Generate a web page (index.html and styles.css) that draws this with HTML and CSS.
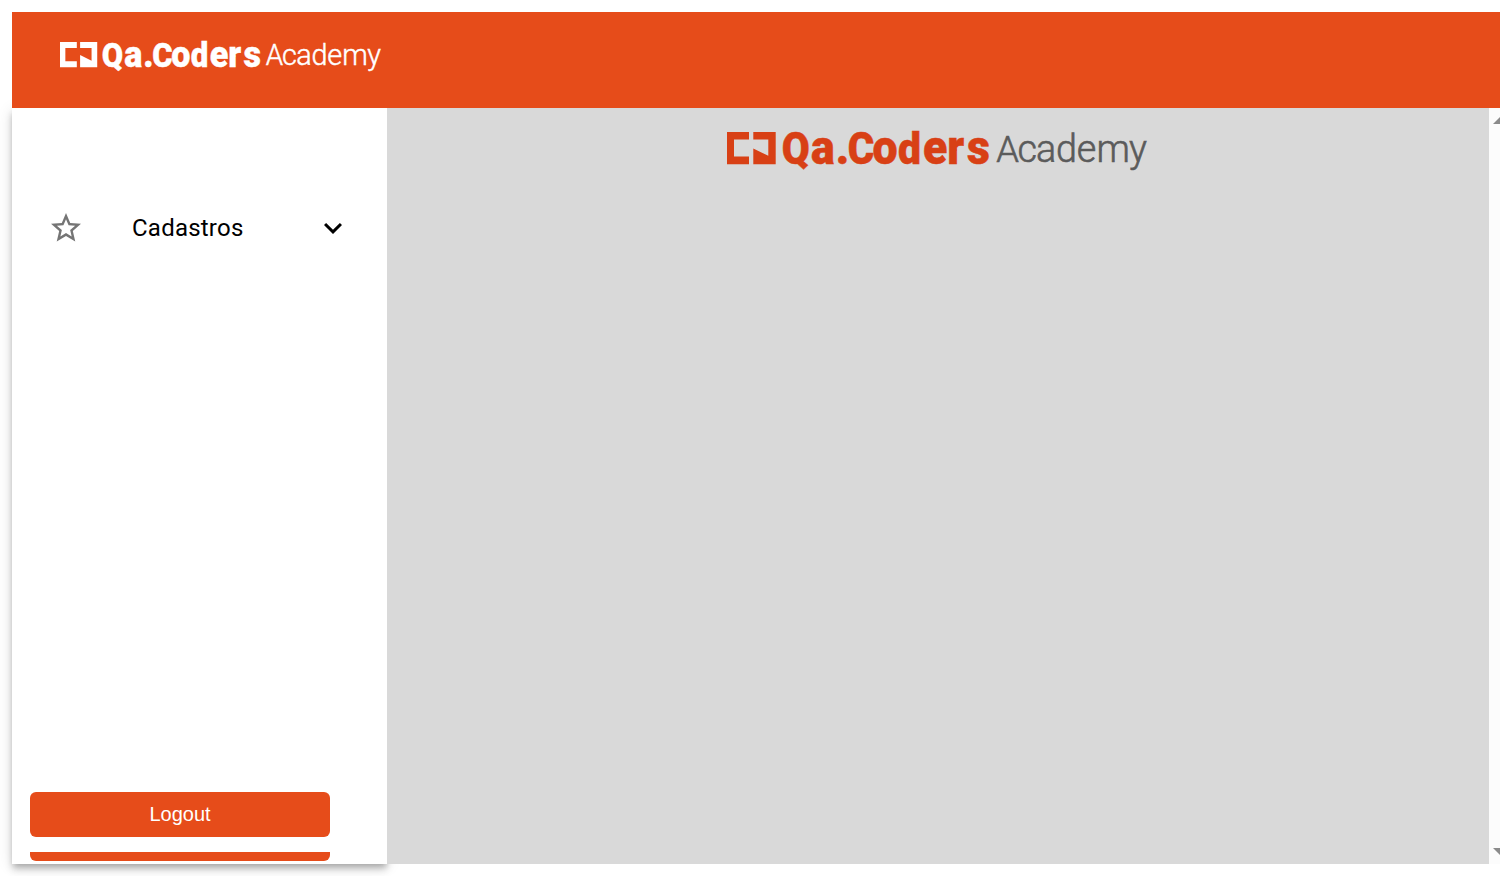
FILE: index.html
```html
<!DOCTYPE html>
<html lang="pt-BR">
<head>
<meta charset="utf-8">
<title>Qa.Coders Academy</title>
<link rel="stylesheet" href="styles.css">
</head>
<body>
<div class="app">
  <header class="header">
    <svg class="logo logo-light" viewBox="0 0 420 40" preserveAspectRatio="none">
      <path class="logo-brand" d="M0 0H22V7.6H7V24.6H22V32.3H0ZM26.3 0H48.7V32.3H26.3V16.6L41.3 23.8V7.6H26.3Z"/>
      <text class="logo-brand logo-bold" transform="scale(.93 1)" x="58.8 90.4 117 129.8 156.4 184 210.8 236.8 258.2" y="31.8"><tspan class="cap">Q</tspan>a.<tspan class="cap">C</tspan>o<tspan class="asc">d</tspan>ers</text>
      <text class="logo-sub" transform="scale(.98 1)" x="274.7 296.4 315.4 335.8 356.8 377 410.2" y="29.8"><tspan class="sub-cap">A</tspan>cademy</text>
    </svg>
  </header>
  <div class="body">
    <aside class="sidebar">
      <nav class="nav">
        <a class="nav-item">
          <svg class="nav-star" viewBox="0 0 24 24"><path d="M22 9.24l-7.19-.62L12 2 9.19 8.63 2 9.24l5.46 4.73L5.82 21 12 17.27 18.18 21l-1.63-7.03L22 9.24zM12 15.4l-3.76 2.27 1-4.28-3.32-2.88 4.38-.38L12 6.1l1.71 4.04 4.38.38-3.32 2.88 1 4.28L12 15.4z"/></svg>
          <span class="nav-label">Cadastros</span>
          <svg class="nav-chevron" viewBox="0 0 24 24"><path d="M16.59 8.59L12 13.17 7.41 8.59 6 10l6 6 6-6z"/></svg>
        </a>
      </nav>
      <div class="sidebar-footer">
        <button class="logout">Logout</button>
        <div class="clipped-button"></div>
      </div>
    </aside>
    <main class="main">
      <svg class="logo logo-color" viewBox="0 0 420 40" preserveAspectRatio="none">
        <path class="logo-brand" d="M0 0H22V7.6H7V24.6H22V32.3H0ZM26.3 0H48.7V32.3H26.3V16.6L41.3 23.8V7.6H26.3Z"/>
        <text class="logo-brand logo-bold" transform="scale(.93 1)" x="58.8 90.4 117 129.8 156.4 184 210.8 236.8 258.2" y="31.8"><tspan class="cap">Q</tspan>a.<tspan class="cap">C</tspan>o<tspan class="asc">d</tspan>ers</text>
        <text class="logo-sub" transform="scale(.98 1)" x="274.7 296.4 315.4 335.8 356.8 377 410.2" y="29.8"><tspan class="sub-cap">A</tspan>cademy</text>
      </svg>
    </main>
    <div class="scrollbar">
      <svg class="scroll-arrow" viewBox="0 0 7 7"><path d="M0 7L7 0V7Z"/></svg>
      <svg class="scroll-arrow" viewBox="0 0 7 7"><path d="M0 0H7V7Z"/></svg>
    </div>
  </div>
</div>
</body>
</html>
```
FILE: styles.css
```css
* { box-sizing: border-box; }

body {
  margin: 0;
  height: 876px;
  overflow: hidden;
  background: #fff;
  font-family: Roboto, "Liberation Sans", sans-serif;
}

.app {
  display: flex;
  flex-direction: column;
  padding: 12px 0 12px 12px;
  height: 876px;
}

.header {
  position: relative;
  z-index: 1;
  flex: 0 0 96px;
  padding: 30px 48px;
  background: #e64c1a;
}

.logo { display: block; overflow: visible; }
.logo-bold { font-size: 48px; font-weight: 900; stroke-width: .5px; }
.logo-bold .cap { font-size: 43.5px; }
.logo-bold .asc { font-size: 44px; }
.logo-sub { font-size: 38.5px; font-weight: 300; stroke-width: .6px; }
.logo-sub .sub-cap { font-size: 37px; }

.logo-light { width: 321px; height: 31.4px; fill: #fff; }
.logo-light text { stroke: #fff; }

.logo-color { width: 420px; height: 40px; }
.logo-color .logo-brand { fill: #d84015; }
.logo-color .logo-bold { stroke: #d84015; }
.logo-color .logo-sub { fill: #5b5b5b; stroke: #5b5b5b; }

.body { display: flex; flex: 1; min-height: 0; }

.sidebar {
  display: flex;
  flex-direction: column;
  justify-content: space-between;
  flex: 0 0 375px;
  padding: 96px 0 3px;
  background: #fff;
  box-shadow:
    0 3px 6px -1.5px rgba(0, 0, 0, .2),
    0 6px 7.5px 0 rgba(0, 0, 0, .14),
    0 1.5px 15px 0 rgba(0, 0, 0, .12);
}

.nav-item {
  display: flex;
  align-items: center;
  height: 48px;
  padding: 0 36px;
  color: #000;
}
.nav-star { width: 36px; height: 36px; margin-right: 48px; fill: #757575; }
.nav-label { flex: 1; font-size: 24px; letter-spacing: .225px; }
.nav-chevron { width: 36px; height: 36px; fill: #000; }

.sidebar-footer { width: 300px; margin-left: 18px; }

.logout {
  display: block;
  width: 300px;
  height: 45px;
  padding: 0;
  border: 0;
  border-radius: 6px;
  background: #e64c1a;
  color: #fff;
  font: 20px "Liberation Sans", Arial, sans-serif;
}

.clipped-button {
  height: 9px;
  margin-top: 15px;
  border-radius: 0 0 6px 6px;
  background: #e64c1a;
}

.main {
  display: flex;
  position: relative;
  justify-content: center;
  align-items: flex-start;
  flex: 1;
  padding: 24px 2px 0 0;
  background: #d9d9d9;
}

.scrollbar {
  display: flex;
  flex-direction: column;
  justify-content: space-between;
  align-items: flex-end;
  flex: 0 0 11px;
  padding: 9px 0;
  background: #fcfcfc;
}
.scroll-arrow { width: 7px; height: 7px; fill: #8b8b8b; }
```
